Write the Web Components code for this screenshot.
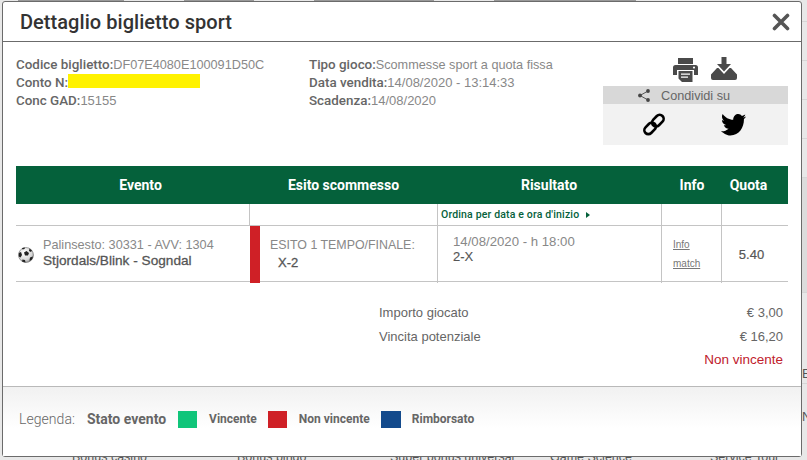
<!DOCTYPE html>
<html lang="it">
<head>
<meta charset="utf-8">
<title>Dettaglio biglietto sport</title>
<style>
  html,body{ margin:0; padding:0; background:#e8e8e8; }
  body{ width:807px; height:460px; overflow:hidden; position:relative; font-family:"Liberation Sans",Arial,sans-serif; }
</style>
</head>
<body>
<page-backdrop></page-backdrop>
<ticket-modal heading="Dettaglio biglietto sport">
  <ticket-info></ticket-info>
  <bet-table></bet-table>
  <bet-totals></bet-totals>
  <legend-bar slot="footer"></legend-bar>
</ticket-modal>

<script>
/* page dimmed behind the dialog: only its edges show */
class PageBackdrop extends HTMLElement {
  constructor(){
    super();
    this.attachShadow({mode:'open'});
    this.shadowRoot.innerHTML=`
      <style>
        :host{ display:flex; flex-direction:column; width:807px; height:460px; overflow:hidden; font:12.500px "Liberation Sans",Arial,sans-serif; color:#555; }
        .top{ height:1px; display:flex; gap:60px; padding-left:18px; }
        .top i{ display:block; height:1px; background:#999; }
        .mid{ flex:1; display:flex; justify-content:flex-end; }
        .side{ width:5px; display:flex; flex-direction:column; font-size:13px; overflow:hidden; }
        .side div{ border-bottom:1px solid #d6d6d6; box-sizing:border-box; line-height:14px; }
        .bottom{ height:7px; display:flex; overflow:hidden; padding-left:72px; }
        .bottom span{ line-height:14px; margin-top:-3px; white-space:nowrap; }
      </style>
      <div class="top"><i style="width:106px"></i><i style="width:70px"></i><i style="width:120px"></i><i style="width:142px"></i></div>
      <div class="mid"><div class="side">
        <div style="height:21px"></div><div style="height:39px"></div><div style="height:39px"></div>
        <div style="height:39px"></div><div style="height:39px"></div><div style="height:115px;background:#dcdcdc"></div>
        <div style="height:91px;padding-top:74px">E</div><div style="height:60px;padding-top:26px;border:0">N</div>
      </div></div>
      <div class="bottom">
        <span style="width:165px">Bonus casino</span><span style="width:153px">Bonus bingo</span>
        <span style="width:160px">Super bonus universal</span><span style="width:160px">Game Science</span>
        <span>Service Tour</span>
      </div>`;
  }
}
customElements.define('page-backdrop',PageBackdrop);

class TicketModal extends HTMLElement {
  constructor(){
    super();
    this.attachShadow({mode:'open'});
    this.shadowRoot.innerHTML=`
      <style>
        :host{ position:absolute; left:2px; top:1px; width:800px; height:456px; box-sizing:border-box; display:flex; flex-direction:column;
               background:#fff; border:1px solid #6b6b6b; border-radius:3px; }
        header{ height:40px; flex:none; box-sizing:border-box; border-bottom:1px solid #6b6b6b; display:flex; align-items:center; justify-content:space-between; padding:0 11px 0 17px; }
        h1{ margin:0; font:500 20px/24px Roboto,sans-serif; color:#333; letter-spacing:.05px; }
        .main{ flex:1; padding:0 13px; }
        svg{ display:block; }
      </style>
      <header>
        <h1></h1>
        <svg width="18" height="18" viewBox="0 0 18 18"><path d="M2.5 2.5 15.5 15.5M15.5 2.5 2.5 15.5" stroke="#555" stroke-width="3.6" stroke-linecap="round"/></svg>
      </header>
      <div class="main"><slot></slot></div>
      <slot name="footer"></slot>`;
  }
  connectedCallback(){
    this.shadowRoot.querySelector('h1').textContent=this.getAttribute('heading')||'';
  }
}
customElements.define('ticket-modal',TicketModal);

class TicketInfo extends HTMLElement {
  constructor(){
    super();
    this.attachShadow({mode:'open'});
    this.shadowRoot.innerHTML=`
      <style>
        :host{ display:grid; grid-template-columns:293px 294px 185px; height:124px; font:13px/18px "Liberation Sans",Arial,sans-serif; color:#888; }
        .col{ padding-top:14px; white-space:nowrap; }
        .col div{ height:18px; }
        b{ font:500 13.400px/18px Roboto,sans-serif; color:#666; }
        .tight{ font-size:12.700px; }
        mark{ display:inline-block; width:132px; height:14px; background:#fff200; vertical-align:-1px; }
        .side{ padding-top:15px; }
        .tools{ display:flex; gap:13px; height:29px; padding-left:70px; }
        svg{ display:block; }
        .head{ height:18px; background:#d8d8d8; display:flex; align-items:center; padding-left:35px; gap:11px; color:#666; font-size:12.700px; }
        .head span{ padding-top:2px; }
        .links{ height:41px; background:#f2f2f2; display:flex; align-items:center; padding-left:40px; gap:56px; }
      </style>
      <div class="col">
        <div><b>Codice biglietto:</b><span class="tight">DF07E4080E100091D50C</span></div>
        <div><b>Conto N:</b><mark></mark></div>
        <div><b>Conc GAD:</b>15155</div>
      </div>
      <div class="col">
        <div><b>Tipo gioco:</b><span class="tight">Scommesse sport a quota fissa</span></div>
        <div><b>Data vendita:</b>14/08/2020 - 13:14:33</div>
        <div><b>Scadenza:</b>14/08/2020</div>
      </div>
      <div class="side">
        <div class="tools">
          <svg width="25" height="25" viewBox="0 0 25 25"><path fill="#4a4a4a" fill-rule="evenodd" d="M5 1h15v6H5zM2.5 8h20A2.5 2.5 0 0 1 25 10.500V18h-4v-5H4v5H0v-7.500A2.500 2.500 0 0 1 2.500 8zM21 9.500a1 1 0 1 0 .01 0z"/><path fill="#4a4a4a" fill-rule="evenodd" d="M5.500 14h14v11H9l-3.500-3.500zM8 16.500v1.300h9v-1.300zM8 19.500v1.300h7v-1.300z"/></svg>
          <svg width="26" height="23" viewBox="0 0 26 23"><path fill="#4a4a4a" d="M10.500 0h5v7H20l-7 7.500L6 7h4.500z"/><path fill="#4a4a4a" d="M6 11 0 17.500V21a2 2 0 0 0 2 2h22a2 2 0 0 0 2-2v-3.500L20 11h-1.500L13 17 7.500 11z"/></svg>
        </div>
        <div class="head">
          <svg width="12" height="13" viewBox="0 0 12 13"><path d="M10 2 2 6.500 10 11" fill="none" stroke="#555"/><circle cx="10" cy="2" r="1.900" fill="#444"/><circle cx="2" cy="6.500" r="1.900" fill="#444"/><circle cx="10" cy="11" r="1.900" fill="#444"/></svg>
          <span>Condividi su</span>
        </div>
        <div class="links">
          <svg width="22" height="23" viewBox="0 0 22 23"><g fill="none" stroke="#000" stroke-width="2.600" transform="rotate(-45 11 11.500)"><rect x="-1" y="7.500" width="13" height="8" rx="4"/><rect x="10" y="7.500" width="13" height="8" rx="4"/></g></svg>
          <svg width="25" height="23" viewBox="0 0 24 22"><path fill="#000" d="M24 3.200 21.200 4.500C22.200 3.800 23 2.800 23.300 1.500 22.300 2.100 21.300 2.600 20.100 2.800 18.200-.4 11.900.2 11.700 6.400 7.700 6.300 3.900 4 1.600 .8.300 3 1 5.900 3.100 7.300 2.300 7.300 1.600 7.100.900 6.700.900 9.100 2.600 11 4.800 11.500 4.100 11.700 3.400 11.700 2.700 11.600 3.300 13.500 5.100 14.900 7.300 15 5 16.800 2.700 17.700 0 17.400 2.300 18.900 4.800 21.500 9 21.500 17.800 21.500 22.300 13 22 5.700 22.800 5 23.500 4.100 24 3.200Z"/></svg>
        </div>
      </div>`;
  }
}
customElements.define('ticket-info',TicketInfo);

class BetTable extends HTMLElement {
  constructor(){
    super();
    this.attachShadow({mode:'open'});
    this.shadowRoot.innerHTML=`
      <style>
        :host{ display:block; font:13px "Liberation Sans",Arial,sans-serif; color:#888; }
        .row{ display:grid; grid-template-columns:234px 187px 224px 60px 67px; }
        .thead{ height:38px; background:#05613b; color:#fff; font:700 14px/38px Roboto,sans-serif; text-align:center; }
        .thead div:first-child{ padding-left:15px; }
        .thead div:nth-child(4){ padding-left:2px; }
        .thead div:last-child{ padding-right:12px; }
        .sub{ height:22px; box-sizing:border-box; border-bottom:1px solid #c4c4c4; }
        .sub div{ border-left:1px solid #c4c4c4; }
        .sub div:first-child{ border-left:0; }
        .sub div:nth-child(2){ margin-left:-1px; }
        .sort{ font:500 10.500px/19px Roboto,sans-serif; letter-spacing:.16px; color:#05613b; padding-left:3px; white-space:nowrap; display:flex; align-items:center; gap:7px; }
        .sort i{ width:0; height:0; border-left:4px solid #05613b; border-top:3.500px solid transparent; border-bottom:3.500px solid transparent; }
        .data{ height:56px; box-sizing:border-box; border-bottom:1px solid #c4c4c4; }
        .data > div{ border-left:1px solid #c4c4c4; box-sizing:border-box; }
        .event{ border-left:0 !important; display:flex; align-items:center; gap:9px; padding:0 0 0 2px; line-height:15px; font-size:12.700px; }
        .event > div{ margin-top:-3px; }
        strong{ display:block; font-weight:400; color:#555; -webkit-text-stroke:.3px #555; }
        .event strong{ font-size:13.600px; letter-spacing:.02px; }
        .event svg{ margin-top:1px; }
        .out{ border-left:10px solid #cf2026 !important; padding:11px 0 0 10px; line-height:16px; font-size:12.400px; }
        .out strong{ padding:2px 0 0 8px; font-size:13px; }
        .res{ padding:8px 0 0 15px; line-height:15px; font-size:13.200px; }
        .res strong{ -webkit-text-stroke:.15px #555; font-size:13px; }
        .info{ padding:9px 0 0 11px; font-size:10px; line-height:19px; color:#777; }
        .info u{ display:block; }
        .odd{ text-align:center; line-height:57px; color:#555; -webkit-text-stroke:.2px #555; padding-right:7px; }
      </style>
      <div class="row thead"><div>Evento</div><div>Esito scommesso</div><div>Risultato</div><div>Info</div><div>Quota</div></div>
      <div class="row sub"><div></div><div></div><div class="sort">Ordina per data e ora d'inizio <i></i></div><div></div><div></div></div>
      <div class="row data">
        <div class="event">
          <svg width="16" height="16" viewBox="0 0 16 16">
            <defs><radialGradient id="ball" cx=".4" cy=".35" r=".8"><stop offset="0" stop-color="#fff"/><stop offset=".6" stop-color="#d8d8d8"/><stop offset="1" stop-color="#666"/></radialGradient></defs>
            <circle cx="8" cy="8" r="7.500" fill="url(#ball)" stroke="#555" stroke-width=".5"/>
            <path fill="#222" d="M6 5.500 8.500 4 11 6 10 8.500H7zM.8 6 3 5 4 8 2.500 10.500 .8 9.500zM11.500 1.500 14 3.500 13 5 11 4zM12 10.500 15 9.500 14 12.500 11.500 14zM4.500 12.500 7 13 7.500 15.500 4 14.500zM4 1 7 .5 6.500 2 4.500 2.500z"/>
          </svg>
          <div>Palinsesto: 30331 - AVV: 1304<strong>Stjordals/Blink - Sogndal</strong></div>
        </div>
        <div class="out">ESITO 1 TEMPO/FINALE:<strong>X-2</strong></div>
        <div class="res">14/08/2020 - h 18:00<strong>2-X</strong></div>
        <div class="info"><u>Info</u><u>match</u></div>
        <div class="odd">5.40</div>
      </div>`;
  }
}
customElements.define('bet-table',BetTable);

class BetTotals extends HTMLElement {
  constructor(){
    super();
    this.attachShadow({mode:'open'});
    this.shadowRoot.innerHTML=`
      <style>
        :host{ display:grid; grid-template-columns:1fr auto; margin:19px 5px 0 363px; font:13px/23.500px "Liberation Sans",Arial,sans-serif; color:#666; }
        .val{ text-align:right; }
        .lost{ grid-column:2; color:#c0202c; font-size:13.500px; }
      </style>
      <span>Importo giocato</span><span class="val">&euro; 3,00</span>
      <span>Vincita potenziale</span><span class="val">&euro; 16,20</span>
      <span class="val lost">Non vincente</span>`;
  }
}
customElements.define('bet-totals',BetTotals);

class LegendBar extends HTMLElement {
  constructor(){
    super();
    this.attachShadow({mode:'open'});
    this.shadowRoot.innerHTML=`
      <style>
        :host{ display:flex; align-items:center; height:70px; box-sizing:border-box; padding:0 0 5px 16px; border-top:1px solid #b9b9b9;
               background:linear-gradient(#f1f1f1,#fff 60%); font:12px Roboto,sans-serif; color:#666; white-space:nowrap; }
        .title{ font-size:14px; font-weight:300; margin-right:12px; letter-spacing:.05px; }
        .state{ font-size:14px; font-weight:700; margin-right:12px; }
        i{ display:block; width:19px; height:17px; margin-right:12px; }
        b{ margin-right:11px; }
      </style>
      <span class="title">Legenda:</span>
      <span class="state">Stato evento</span>
      <i style="background:#10c57a"></i><b>Vincente</b>
      <i style="background:#cf2026"></i><b>Non vincente</b>
      <i style="background:#134a8c;width:20px;margin-right:11px"></i><b>Rimborsato</b>`;
  }
}
customElements.define('legend-bar',LegendBar);
</script>
</body>
</html>
